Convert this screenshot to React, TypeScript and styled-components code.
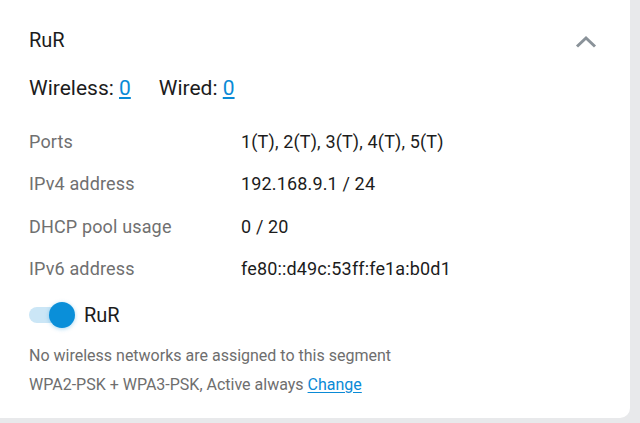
import styled, { createGlobalStyle } from "styled-components";

const GlobalStyle = createGlobalStyle`
    html, body {
        margin: 0;
        padding: 0;
        background: #e8e9eb;
        font-family: Roboto, "Noto Sans", Arial, sans-serif;
    }
`;

const Page = styled.div`
    width: 640px;
    height: 423px;
    overflow: hidden;
`;

const Card = styled.div`
    width: 630px;
    height: 418px;
    box-sizing: border-box;
    background: #ffffff;
    border-radius: 0 0 10px 0;
    padding: 28px 33px 0 29px;
`;

const Header = styled.div`
    display: flex;
    align-items: center;
    justify-content: space-between;
    height: 24px;
`;

const Title = styled.span`
    font-size: 20px;
    color: #1c1c1c;
`;

const Counts = styled.div`
    display: flex;
    gap: 28px;
    margin-top: 24px;
    height: 24px;
    align-items: center;
    font-size: 21px;
    color: #1c1c1c;
`;

const Link = styled.a`
    color: #0a8ad6;
    text-decoration: underline;
    text-underline-offset: 2px;
    cursor: pointer;
`;

const InfoTable = styled.div`
    margin-top: 20px;
    display: grid;
    grid-template-columns: 212px 1fr;
    grid-auto-rows: 42.5px;
    align-items: center;
    font-size: 18px;
    letter-spacing: 0.15px;
`;

const Label = styled.span`
    color: #707070;
`;

const Value = styled.span`
    color: #1c1c1c;
`;

const ToggleRow = styled.div`
    display: flex;
    align-items: center;
    gap: 15px;
    margin-top: 11px;
    height: 28px;
    font-size: 20px;
    color: #1c1c1c;
`;

const Track = styled.div<{ $on: boolean }>`
    position: relative;
    width: 40px;
    height: 16px;
    border-radius: 8px;
    background: ${(p) => (p.$on ? "#cbe6f6" : "#d6d6d6")};
`;

const Thumb = styled.div<{ $on: boolean }>`
    position: absolute;
    top: -5px;
    left: ${(p) => (p.$on ? "20px" : "-4px")};
    width: 26px;
    height: 26px;
    border-radius: 50%;
    background: ${(p) => (p.$on ? "#0a8fd9" : "#f2f2f2")};
    box-shadow: 0 1px 4px rgba(10, 143, 217, 0.35);
`;

const Note = styled.div`
    font-size: 16px;
    line-height: 29px;
    color: #6e6e6e;
`;

const Notes = styled.div`
    margin-top: 12px;
`;

const Chevron = () => (
    <svg width="22" height="14" viewBox="0 0 22 14" style={{ marginTop: 3 }}>
        <path d="M2 11.5 L11 3 L20 11.5" fill="none" stroke="#8a9299" strokeWidth="3" />
    </svg>
);

const rows: [string, string][] = [
    ["Ports", "1(T), 2(T), 3(T), 4(T), 5(T)"],
    ["IPv4 address", "192.168.9.1 / 24"],
    ["DHCP pool usage", "0 / 20"],
    ["IPv6 address", "fe80::d49c:53ff:fe1a:b0d1"],
];

const App = () => {
    return (
        <Page>
            <GlobalStyle />
            <Card>
                <Header>
                    <Title>RuR</Title>
                    <Chevron />
                </Header>

                <Counts>
                    <span>Wireless: <Link>0</Link></span>
                    <span>Wired: <Link>0</Link></span>
                </Counts>

                <InfoTable>
                    {rows.map(([label, value]) => (
                        <>
                            <Label key={label}>{label}</Label>
                            <Value key={label + "-v"}>{value}</Value>
                        </>
                    ))}
                </InfoTable>

                <ToggleRow>
                    <Track $on={true}>
                        <Thumb $on={true} />
                    </Track>
                    <span>RuR</span>
                </ToggleRow>

                <Notes>
                    <Note>No wireless networks are assigned to this segment</Note>
                    <Note>WPA2-PSK + WPA3-PSK, Active always <Link>Change</Link></Note>
                </Notes>
            </Card>
        </Page>
    );
};

export default App;
